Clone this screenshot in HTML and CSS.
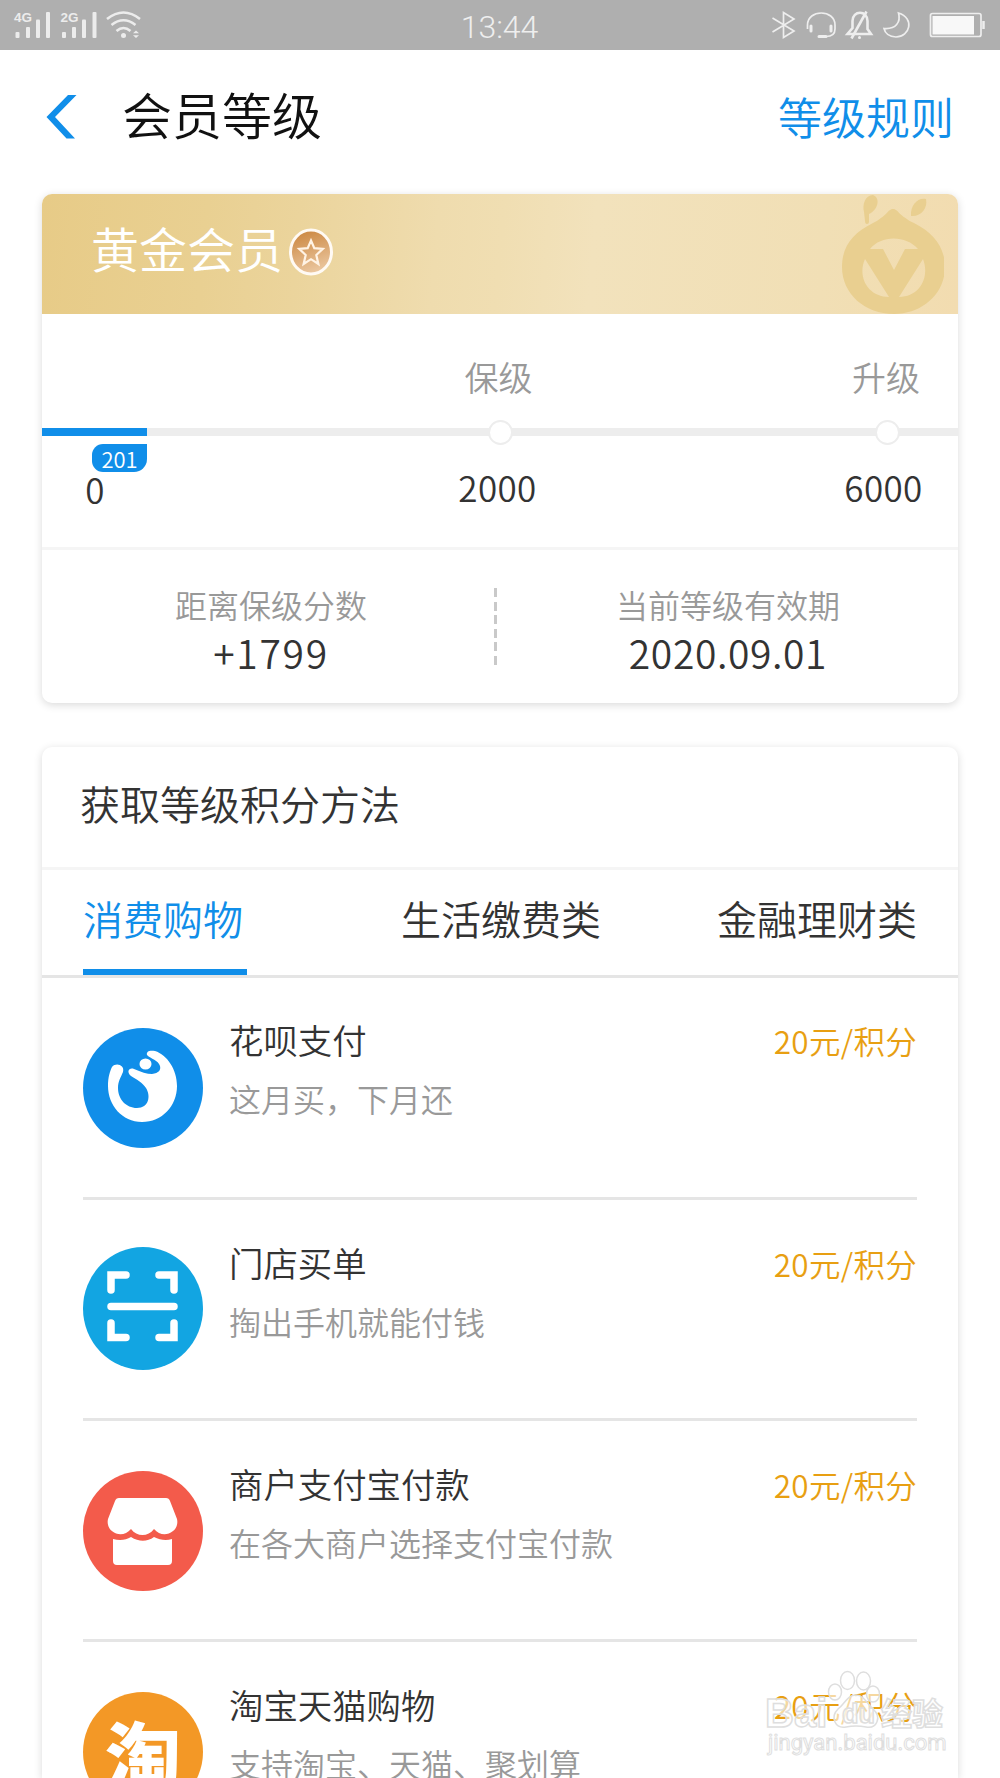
FILE: index.html
```html
<!DOCTYPE html>
<html lang="zh-CN">
  <head>
    <meta charset="UTF-8" />
    <meta name="viewport" content="width=device-width, initial-scale=1.0" />
    <title>会员等级</title>
    <link rel="stylesheet" href="styles.css">
  </head>
  <body>
    <div class="status-bar">
      <svg class="status-left" width="130" height="30" viewBox="12 10 130 30" fill="#ececec">
        <text x="14" y="22" class="net">4G</text>
        <rect x="15.5" y="32" width="4" height="6" rx="1" />
        <rect x="26" y="27" width="4" height="11" rx="1" />
        <rect x="36" y="19.5" width="4" height="18.5" rx="1" />
        <rect x="46" y="12" width="4" height="26" rx="1" />
        <text x="60.5" y="22" class="net">2G</text>
        <rect x="62" y="32" width="4" height="6" rx="1" />
        <rect x="72" y="27" width="4" height="11" rx="1" />
        <rect x="82" y="19.5" width="4" height="18.5" rx="1" />
        <rect x="92.500" y="12" width="4" height="26" rx="1" />
        <g fill="none" stroke="#ececec" stroke-width="2.6">
          <path d="M107 19Q123.500 6 140 19" />
          <path d="M111.500 25Q123.500 15.500 135.500 25" />
          <path d="M116.500 31Q123.500 25 130.500 31" />
        </g>
        <circle cx="123.500" cy="35.500" r="2.500" />
        <path d="M133 33.300L136 30.500L139 33.300ZM133 35.200L136 38L139 35.200Z" />
      </svg>
      <span class="time">13:44</span>
      <svg class="status-right" width="215" height="30" viewBox="770 10 215 30" fill="none" stroke="#eeeeee" stroke-width="1.700">
        <path d="M772.500 18L794 31L783.500 37.500V12.500L794 19L772.500 32" />
        <path d="M807.500 29V25C807.500 9 835 9 835 25V29C835 34.500 831 36.500 826 36.500" />
        <path d="M811 26V31M831 26V31M819 36.500H826" stroke-width="3" stroke-linecap="round" />
        <path d="M847.500 34H871L867.500 29V21C867.500 10 852.500 10 852.500 21V28Z" stroke-width="2.600" />
        <path d="M851.500 38.500L866.500 11.500" stroke-width="2.600" />
        <circle cx="859.500" cy="37.500" r="1.500" fill="#eee" stroke="none" />
        <path d="M898.500 13C915 18 910 37 896 37C889 37 885 33 884 28.500C896 29.500 901 22 898.500 13Z" />
        <rect x="930.500" y="13.500" width="50.500" height="23" rx="2" />
        <rect x="932.500" y="16" width="41.500" height="18.500" fill="#f8f8f8" stroke="none" />
        <path d="M983.500 21V29" stroke-width="2.500" />
      </svg>
    </div>

    <header class="nav">
      <svg class="back" width="32" height="44" viewBox="0 0 32 44">
        <path d="M22 0H30.500L9 22L29 43.500H20.500L0.500 22Z" fill="#108ee9" />
      </svg>
      <h1>会员等级</h1>
      <a class="rules">等级规则</a>
    </header>

    <div class="card level-card">
      <div class="level-head">
        <span class="level-name">黄金会员</span>
        <svg class="medal" width="46" height="50" viewBox="0 0 46 50">
          <defs>
            <linearGradient id="bronze" x1="0.300" y1="0" x2="0.600" y2="1">
              <stop offset="0" stop-color="#cb8741" />
              <stop offset="1" stop-color="#ecc9a3" />
            </linearGradient>
          </defs>
          <ellipse cx="23" cy="25" rx="20.500" ry="22" fill="url(#bronze)" stroke="#fffaf4" stroke-width="3" />
          <path d="M23 13.500L26.300 21.200L34.800 21.900L28.300 28L30.400 37L23 32.200L15.600 37L17.700 28L11.200 21.900L19.700 21.200Z" fill="none" stroke="#fff3e5" stroke-width="2.200" />
        </svg>
        <svg class="mascot" width="104" height="120" viewBox="840 194 104 120">
          <g fill="#e9cf90">
            <path fill-rule="evenodd" d="M893 209C898 209 899 216 914 223C934 233 945 248 945 267C945 294 922 314 894 314C865 314 842 294 842 267C842 246 853 233 873 223C887 216 888 209 893 209ZM870 249C881 235 906 235 918 249H905L894 270L883 249ZM865 259L889 297C868 297 857 277 865 259ZM923 259L899 297C920 297 930 277 923 259Z" />
            <path d="M864 212C862 205 865 195 873 195C881 198 878 210 869 214V222Q869 224 867 224Q865 224 865 221Z" />
            <path d="M911 216C910 205 918 197 926 199C928 208 921 217 911 216Z" />
          </g>
        </svg>
      </div>

      <div class="scale">
        <div class="stops labels">
          <span></span>
          <span>保级</span>
          <span>升级</span>
        </div>
        <div class="track">
          <div class="done"></div>
          <i class="dot dot-keep"></i>
          <i class="dot dot-up"></i>
          <span class="score">201</span>
        </div>
        <div class="stops values">
          <span class="zero">0</span>
          <span>2000</span>
          <span>6000</span>
        </div>
      </div>

      <div class="summary">
        <div class="summary-item">
          <p class="caption">距离保级分数</p>
          <p class="value plus">+1799</p>
        </div>
        <div class="dash"></div>
        <div class="summary-item">
          <p class="caption">当前等级有效期</p>
          <p class="value">2020.09.01</p>
        </div>
      </div>
    </div>

    <div class="card methods">
      <h2>获取等级积分方法</h2>
      <ul class="tabs">
        <li class="active">消费购物</li>
        <li>生活缴费类</li>
        <li>金融理财类</li>
      </ul>

      <div class="list">
        <div class="item">
          <svg class="icon" width="120" height="120" viewBox="0 0 120 120">
            <circle cx="60" cy="60" r="60" fill="#108ee9" />
            <path fill="#fff" d="M64 27C63 23 67 22 72 23C84 27 94 41 94 58C94 78 79 94 59 94C39 94 25 77 25 58C25 49 27 43 29 39C33 34 42 37 40 44C38 49 35 53 35 60C35 71 43 80 54 80C66 80 68 68 63 60C60 55 53 51 48 48C43 44 46 39 51 41C58 44 64 46 69 46C76 45 78 42 77 38C75 32 68 31 64 27Z" />
            <ellipse cx="62.500" cy="36" rx="6" ry="5.500" fill="#fff" />
          </svg>
          <div class="info">
            <h3>花呗支付</h3>
            <p>这月买，下月还</p>
          </div>
          <span class="rate">20元/积分</span>
        </div>

        <div class="item">
          <svg class="icon icon-scan" width="120" height="123" viewBox="0 0 120 123">
            <ellipse cx="60" cy="61.500" rx="60" ry="61.500" fill="#12a5e2" />
            <path d="M28 43V28H43M76 28H91V43M28 59.500H91M28 76V90.500H43M76 90.500H91V76" fill="none" stroke="#fff" stroke-width="7.500" stroke-linecap="round" />
          </svg>
          <div class="info">
            <h3>门店买单</h3>
            <p>掏出手机就能付钱</p>
          </div>
          <span class="rate">20元/积分</span>
        </div>

        <div class="item">
          <svg class="icon" width="120" height="120" viewBox="0 0 120 120">
            <circle cx="60" cy="60" r="60" fill="#f35b4b" />
            <g fill="#fff">
              <path d="M36 27H83Q86 27 87 30L94 48C97 61 80 69 71 58C65 66 54 66 48 58C39 69 22 61 25 48L32 30Q33 27 36 27Z" />
              <path d="M30 68C37 70 43 69 48 66C56 71 64 71 71 66C77 69 83 70 89 68V90Q89 94 85 94H34Q30 94 30 90Z" />
            </g>
          </svg>
          <div class="info">
            <h3>商户支付宝付款</h3>
            <p>在各大商户选择支付宝付款</p>
          </div>
          <span class="rate">20元/积分</span>
        </div>

        <div class="item">
          <div class="icon taobao">淘</div>
          <div class="info">
            <h3>淘宝天猫购物</h3>
            <p>支持淘宝、天猫、聚划算</p>
          </div>
          <span class="rate">20元/积分</span>
        </div>
      </div>
    </div>

    <svg class="watermark" width="190" height="100" viewBox="762 1665 190 100">
      <g fill="#fff" fill-opacity="0.600" stroke="#dedede" stroke-width="1.500">
        <ellipse cx="835" cy="1692" rx="6.500" ry="8" />
        <ellipse cx="847.500" cy="1680.500" rx="7" ry="9" />
        <ellipse cx="863.500" cy="1681" rx="7" ry="9" />
        <ellipse cx="873" cy="1694" rx="6.500" ry="8" />
        <path d="M856 1695C864 1695 867 1704 873 1709C882 1717 877 1729 866 1727Q856 1725 846 1727C835 1729 830 1717 838 1709C845 1704 847 1695 856 1695Z" />
        <text x="765" y="1727" class="wm-name">Bai</text>
        <text x="842" y="1723" class="wm-du">du</text>
        <text x="881" y="1725" class="wm-cn">经验</text>
        <text x="768" y="1750" class="wm-url">jingyan.baidu.com</text>
      </g>
    </svg>
  </body>
</html>
```
FILE: styles.css
```css
* {
  margin: 0;
  padding: 0;
  box-sizing: border-box;
}

body {
  width: 1000px;
  height: 1778px;
  overflow: hidden;
  position: relative;
  background: #fff;
  color: #333;
  font-family: "Noto Sans CJK SC", sans-serif;
  font-weight: 350;
}

h1,
h2,
h3 {
  font-weight: 350;
}

.status-bar {
  height: 50px;
  padding: 10px 15px 0 12px;
  background: #afafaf;
  display: flex;
  justify-content: space-between;
}

.net {
  font: bold 13.5px "Liberation Sans", sans-serif;
}

.time {
  width: 90px;
  margin-left: 87px;
  color: #eee;
  font-family: Roboto, sans-serif;
  font-weight: 300;
  font-size: 32px;
  line-height: 35px;
  text-align: center;
}

.nav {
  height: 144px;
  padding: 0 46px;
  display: flex;
  align-items: center;
}

.back {
  margin-top: -10px;
}

.nav h1 {
  margin: -18px 0 0 44px;
  color: #111;
  font-size: 50px;
  line-height: 60px;
}

.rules {
  margin: -12px 0 0 auto;
  color: #108ee9;
  font-size: 44px;
  line-height: 60px;
}

.card {
  width: 916px;
  margin: 0 auto 44px;
  border-radius: 10px;
  background: #fff;
  box-shadow: 0 2px 9px rgba(0, 0, 0, 0.15);
}

.level-card {
  height: 509px;
}

.level-head {
  height: 120px;
  padding-left: 49px;
  border-radius: 10px 10px 0 0;
  background: linear-gradient(95deg, #e7cb87 0%, #e9d092 18%, #ebd49c 28%, #efdcae 43%, #f0deb2 50%, #f2e2bc 60%, #f1dfb5 85%, #f2dcb0 100%);
  display: flex;
}

.level-name {
  margin-top: 23px;
  color: #fff;
  font-size: 48px;
  line-height: 60px;
}

.medal {
  margin: 33px 0 0 5px;
}

.mascot {
  margin-left: auto;
  margin-right: 14px;
}

.scale {
  height: 236px;
  padding-top: 38px;
  border-bottom: 3px solid #f5f5f5;
}

.stops {
  height: 50px;
  display: grid;
  grid-template-columns: 106px 701px 74px;
  line-height: 50px;
}

.stops span {
  display: flex;
  justify-content: center;
  white-space: nowrap;
}

.labels {
  color: #999;
  font-size: 34px;
}

.values {
  margin-top: 26px;
  font-size: 35px;
  letter-spacing: 0.4px;
  grid-template-columns: 106px 699px 73px;
}

.values .zero {
  padding-top: 2px;
}

.track {
  height: 8px;
  margin-top: 26px;
  background: #ededed;
  position: relative;
}

.done {
  width: 105px;
  height: 8px;
  background: #108ee9;
}

.dot {
  position: absolute;
  top: -8.5px;
  width: 25px;
  height: 25px;
  border: 2.5px solid #ededed;
  border-radius: 50%;
  background: #fff;
}

.dot-keep {
  left: 445.5px;
}

.dot-up {
  left: 832.5px;
}

.score {
  position: absolute;
  top: 16px;
  left: 50px;
  width: 55px;
  height: 28px;
  border-radius: 11px 0 13px 11px;
  background: #108ee9;
  color: #fff;
  font-size: 22px;
  line-height: 29px;
  text-align: center;
}

.summary {
  height: 153px;
  padding-top: 29px;
  display: flex;
}

.summary-item {
  width: 452px;
  padding-left: 6px;
  text-align: center;
}

.summary-item:last-child {
  width: 461px;
  padding-left: 1px;
}

.caption {
  color: #999;
  font-size: 32px;
  line-height: 50px;
}

.value {
  font-size: 39px;
  line-height: 46px;
  letter-spacing: 0.6px;
}

.plus {
  letter-spacing: 1.7px;
}

.dash {
  width: 3px;
  height: 77px;
  margin-top: 9px;
  background: repeating-linear-gradient(#c9c9c9 0 9px, transparent 9px 13.6px);
}

.methods {
  height: 1031px;
  margin-bottom: 0;
  border-radius: 10px 10px 0 0;
  overflow: hidden;
}

.methods h2 {
  height: 123px;
  padding: 26px 38px 0;
  border-bottom: 3px solid #f5f5f5;
  font-size: 40px;
  line-height: 60px;
}

.tabs {
  height: 108px;
  padding: 0 41px;
  border-bottom: 3px solid #e5e5e5;
  display: grid;
  grid-template-columns: 318px 316px 200px;
  list-style: none;
  font-size: 40px;
}

.tabs li {
  height: 105px;
  padding-top: 18px;
  line-height: 60px;
}

.tabs .active {
  width: 164px;
  border-bottom: 6px solid #108ee9;
  color: #108ee9;
}

.list {
  padding: 0 41px;
}

.item {
  height: 221px;
  padding-top: 50px;
  border-bottom: 3px solid #e5e5e5;
  display: flex;
  align-items: flex-start;
}

.item:first-child {
  height: 222px;
}

.icon {
  flex: none;
}

.icon-scan {
  margin-top: -3px;
}

.taobao {
  width: 120px;
  height: 120px;
  border-radius: 50%;
  background: #f39826;
  color: #fff;
  font-size: 76px;
  font-weight: 900;
  line-height: 122px;
  text-align: center;
}

.info {
  margin: -11px 0 0 26px;
}

.item:first-child .info {
  margin-top: -12px;
}

.info h3 {
  font-size: 34.4px;
  line-height: 46px;
}

.info p {
  margin-top: 12px;
  color: #999;
  font-size: 32px;
  line-height: 48px;
}

.rate {
  margin: -10px 0 0 auto;
  color: #e89f12;
  font-size: 31.5px;
  line-height: 46px;
  letter-spacing: 0.3px;
}

.item:first-child .rate {
  margin-top: -11px;
}

.watermark {
  position: absolute;
  left: 762px;
  top: 1665px;
}

.wm-name {
  font: bold 40px "Liberation Sans", sans-serif;
}

.wm-du {
  font: bold 27px "Liberation Sans", sans-serif;
}

.wm-cn {
  font: bold 31px "Noto Sans CJK SC", sans-serif;
}

.wm-url {
  font: 22px Roboto, sans-serif;
  stroke-width: 1;
}
```
